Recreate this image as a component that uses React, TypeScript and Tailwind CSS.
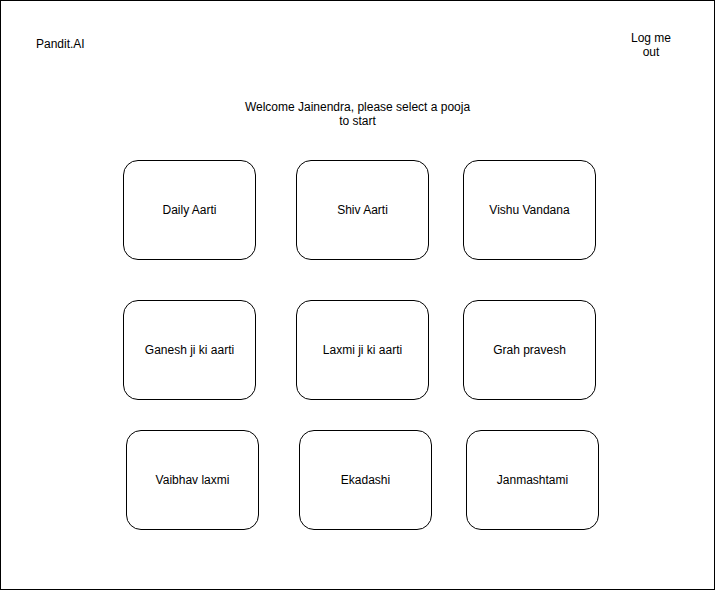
import React from 'react';

const rows: string[][] = [
  ['Daily Aarti', 'Shiv Aarti', 'Vishu Vandana'],
  ['Ganesh ji ki aarti', 'Laxmi ji ki aarti', 'Grah pravesh'],
  ['Vaibhav laxmi', 'Ekadashi', 'Janmashtami'],
];

const PoojaCard: React.FC<{ title: string; className?: string }> = ({ title, className = '' }) => (
  <button
    className={`w-[133px] h-[100px] shrink-0 rounded-[15px] border border-black bg-white flex items-center justify-center text-center ${className}`}
  >
    {title}
  </button>
);

const App: React.FC = () => {
  return (
    <div className="w-[716px] h-[591px] bg-white">
      <div
        className="w-[715px] h-[590px] border border-black text-[12px] leading-[14.4px] text-black"
        style={{ fontFamily: '"Liberation Sans", Arial, Helvetica, sans-serif' }}
      >
        {/* header */}
        <div className="flex justify-between items-start h-[66px]">
          <div className="ml-[35px] mt-[36px]">Pandit.AI</div>
          <div className="w-[60px] mr-[33px] mt-[30px] text-center">
            Log me
            <br />
            out
          </div>
        </div>

        {/* welcome */}
        <div className="mt-[33px] text-center">
          Welcome Jainendra, please select a pooja
          <br />
          to start
        </div>

        {/* pooja grid */}
        <div className="mt-[31px] flex flex-col">
          <div className="flex ml-[122px]">
            <PoojaCard title={rows[0][0]} />
            <PoojaCard title={rows[0][1]} className="ml-[40px]" />
            <PoojaCard title={rows[0][2]} className="ml-[34px]" />
          </div>
          <div className="flex ml-[122px] mt-[40px]">
            <PoojaCard title={rows[1][0]} />
            <PoojaCard title={rows[1][1]} className="ml-[40px]" />
            <PoojaCard title={rows[1][2]} className="ml-[34px]" />
          </div>
          <div className="flex ml-[125px] mt-[30px]">
            <PoojaCard title={rows[2][0]} />
            <PoojaCard title={rows[2][1]} className="ml-[40px]" />
            <PoojaCard title={rows[2][2]} className="ml-[34px]" />
          </div>
        </div>
      </div>
    </div>
  );
};

export default App;
